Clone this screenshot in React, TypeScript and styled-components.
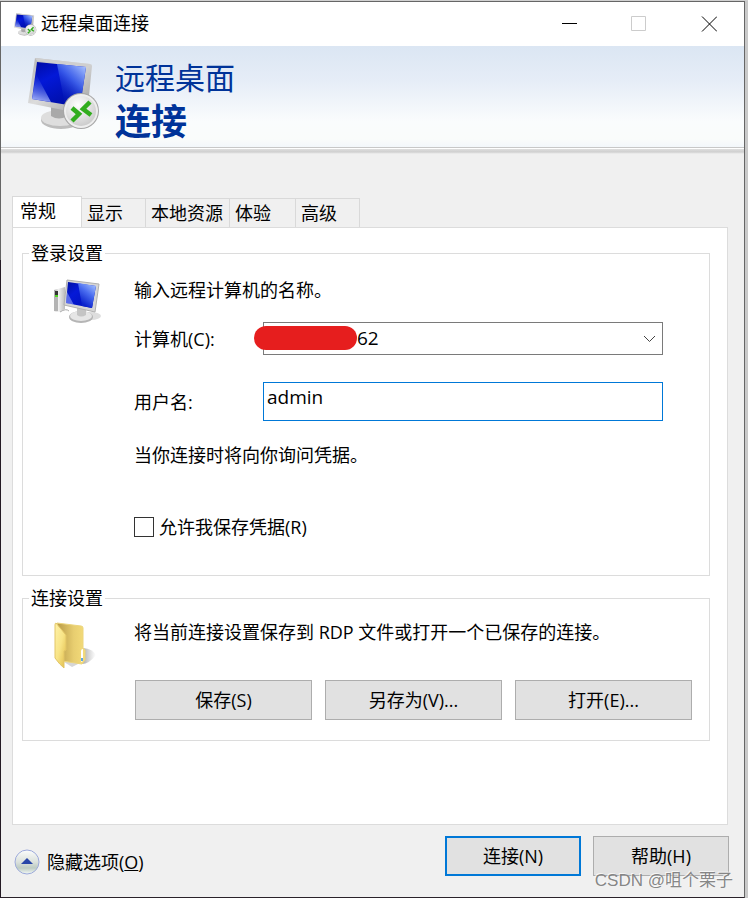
import React from 'react';
import styled, { createGlobalStyle } from 'styled-components';

const GlobalStyle = createGlobalStyle`
  * { box-sizing: border-box; }
  body {
    margin: 0;
    color: #000;
    font-family: "Open Sans", "Noto Sans CJK SC", sans-serif;
    font-size: 18px;
    line-height: 24px;
  }
  button, input, select { font: inherit; color: inherit; }
  svg { display: block; flex: none; }
`;

const Desktop = styled.div`
  display: flex;
  min-height: 100vh;
  padding: 1px 3px 0 1px;
  background: linear-gradient(#d0d0d0, #d0d0d0) 0 0 / 100% 1px no-repeat,
    linear-gradient(#c9c9c9, #c9c9c9) 100% 0 / 3px 100% no-repeat,
    linear-gradient(#666 260px, #241a24 260px);
`;

const Dialog = styled.div`
  position: relative;
  flex: 1;
  display: flex;
  flex-direction: column;
  background: #f0f0f0;
  border: solid #666;
  border-width: 1px 1px 1px 0;
  border-bottom-color: #2a222a;
`;

const TitleBar = styled.header`
  display: flex;
  align-items: center;
  height: 44px;
  padding-left: 12px;
  background: #fff;
`;

const Title = styled.span`
  flex: 1;
  padding: 0 0 2px 4px;
`;

const CaptionButton = styled.button`
  display: flex;
  align-items: center;
  justify-content: center;
  width: 70px;
  height: 44px;
  padding: 0;
  border: 0;
  background: transparent;
`;

const Banner = styled.div`
  display: flex;
  height: 101px;
  padding: 8px 0 0 24px;
  background: linear-gradient(#dbe6f3, #e6edf7 35%, #fafcfd 75%, #fafcfb 92%, #f3f7fb);
`;

const BannerText = styled.h1`
  display: flex;
  flex-direction: column;
  margin: 2px 0 0 14px;
  color: #003399;
  font-size: 30px;
  font-weight: 400;
  line-height: 44px;

  strong {
    font-size: 36px;
    font-weight: 700;
  }
`;

const Ridge = styled.div`
  height: 7px;
  border-top: 1px solid #c8c8c8;
  background: linear-gradient(#fff 1px, #dedede 1px, #cfcfcf 4px, #e2e2e2 5px, #f0f0f0);
`;

const Body = styled.main`
  flex: 1;
  display: flex;
  flex-direction: column;
  padding: 42px 16px 0 11px;
`;

const TabList = styled.div`
  display: flex;
  align-items: flex-end;
`;

const Tab = styled.button<{ $width: number; $active?: boolean }>`
  width: ${(p) => p.$width}px;
  height: ${(p) => (p.$active ? 32 : 29)}px;
  margin-bottom: ${(p) => (p.$active ? -1 : 0)}px;
  padding: ${(p) => (p.$active ? '0 0 3px 7px' : '0 0 0 5px')};
  border: solid #d9d9d9;
  border-width: ${(p) => (p.$active ? '1px 1px 0 1px' : '1px 1px 0 0')};
  background: ${(p) => (p.$active ? '#fff' : '#f0f0f0')};
  text-align: left;
  white-space: nowrap;
`;

const Panel = styled.section`
  flex: 1;
  display: flex;
  flex-direction: column;
  gap: 10px;
  padding: 13px 17px 20px 9px;
  border: 1px solid #dcdcdc;
  background: #fff;
`;

const Group = styled.fieldset`
  min-width: 0;
  margin: 0;
  padding: 0;
  border: 1px solid #dcdcdc;

  legend {
    margin-left: 6px;
    padding: 0 2px;
  }
`;

const GroupBody = styled.div<{ $pad: string }>`
  display: grid;
  grid-template-columns: 111px 1fr;
  align-items: start;
  padding: ${(p) => p.$pad};
`;

const IconCell = styled.div`
  padding-left: 30px;
`;

const Stack = styled.div`
  display: flex;
  flex-direction: column;
`;

const Text = styled.p<{ $top?: number }>`
  margin: ${(p) => p.$top ?? 0}px 0 0;
`;

const Field = styled.div<{ $top: number }>`
  display: grid;
  grid-template-columns: 129px 1fr;
  align-items: center;
  margin-top: ${(p) => p.$top}px;
`;

const Combo = styled.div`
  position: relative;
  display: flex;
  align-items: center;
`;

const Select = styled.select`
  flex: 1;
  height: 33px;
  padding: 0 0 2px 93px;
  border: 1px solid #7a7a7a;
  border-radius: 0;
  background: #fff;
  font-size: 19px;
  appearance: none;
`;

const ComboArrow = styled.svg`
  position: absolute;
  right: 7px;
  pointer-events: none;
`;

const Redaction = styled.span`
  position: absolute;
  left: -9px;
  top: 4px;
  width: 103px;
  height: 24px;
  border-radius: 12px;
  background: #e61e1e;
`;

const TextInput = styled.input`
  width: 100%;
  height: 39px;
  padding: 0 3px 9px;
  border: 1px solid #0078d7;
  border-radius: 0;
  outline: 0;
  background: #fff;
  font-size: 19px;
`;

const Check = styled.label`
  display: flex;
  align-items: center;
  gap: 5px;
  margin-top: 48px;

  input {
    appearance: none;
    width: 20px;
    height: 20px;
    margin: 0;
    border: 1px solid #333;
    background: #fff;
  }
  input:checked { background: #333; }
`;

const ButtonRow = styled.div`
  display: flex;
  gap: 13px;
  margin: 36px 0 0 1px;

  button { flex: 1; }
`;

const PushButton = styled.button<{ $primary?: boolean }>`
  min-width: 136px;
  height: 40px;
  padding: 0;
  border: ${(p) => (p.$primary ? '2px solid #0078d7' : '1px solid #adadad')};
  background: #e1e1e1;
`;

const Footer = styled.footer`
  display: flex;
  align-items: flex-start;
  gap: 12px;
  padding: 11px 15px 21px 13px;
`;

const OptionsToggle = styled.button`
  display: flex;
  align-items: center;
  gap: 7px;
  margin: 13px auto 0 0;
  padding: 0;
  border: 0;
  background: transparent;
`;

const Watermark = styled.span`
  position: absolute;
  right: 11px;
  bottom: 4px;
  color: rgba(120, 120, 120, 0.9);
  font-family: "Liberation Sans", "Noto Sans CJK SC", sans-serif;
  font-size: 17px;
  text-shadow: -1px -1px 0 rgba(255, 255, 255, 0.7);
  white-space: nowrap;
  pointer-events: none;
`;

const RemoteIcon = ({ size, id }: { size: number; id: string }) => (
  <svg width={size} height={size} viewBox="0 0 76 76" aria-hidden="true">
    <defs>
      <linearGradient id={`${id}-frame`} x1="0" y1="0" x2="1" y2="1">
        <stop offset="0" stopColor="#b4b4b4" />
        <stop offset=".45" stopColor="#dcdcdc" />
        <stop offset="1" stopColor="#999" />
      </linearGradient>
      <linearGradient id={`${id}-screen`} x1="0" y1="0" x2=".6" y2="1">
        <stop offset="0" stopColor="#000aa0" />
        <stop offset=".4" stopColor="#0318d8" />
        <stop offset="1" stopColor="#000ea4" />
      </linearGradient>
      <linearGradient id={`${id}-shine`} x1=".9" y1="0" x2=".35" y2=".85">
        <stop offset="0" stopColor="#a9c3ff" />
        <stop offset=".5" stopColor="#4468ee" stopOpacity=".85" />
        <stop offset="1" stopColor="#0a20c0" stopOpacity=".3" />
      </linearGradient>
      <linearGradient id={`${id}-glow`} x1="0" y1="1" x2=".2" y2="0">
        <stop offset="0" stopColor="#b9c6ff" />
        <stop offset="1" stopColor="#2742d8" stopOpacity=".1" />
      </linearGradient>
      <radialGradient id={`${id}-badge`} cx=".4" cy=".3" r=".8">
        <stop offset="0" stopColor="#fff" />
        <stop offset="1" stopColor="#c6c6c6" />
      </radialGradient>
    </defs>
    <ellipse cx="36" cy="66" rx="20" ry="9" fill="#bdbdbd" />
    <ellipse cx="35" cy="64" rx="19" ry="8" fill="#dedede" />
    <path d="M26 50h16v12q-8 5-16 0z" fill="#a9a9a9" />
    <path d="M10 4 65 10q2 0 2 2l-4 40-5 8L3 49z" fill={`url(#${id}-frame)`} />
    <path d="M10 4 65 10l-3 3L12 7z" fill="#cfcfcf" />
    <path d="M12 8 61 13 55 53 7 45z" fill={`url(#${id}-screen)`} />
    <path d="M32 10 61 13 55 53 40 51z" fill={`url(#${id}-shine)`} />
    <path d="M11 20 26 48 7 45z" fill={`url(#${id}-glow)`} />
    <circle cx="56" cy="57" r="18" fill="#a6a6a6" />
    <circle cx="56" cy="57" r="17" fill="#eee" />
    <circle cx="56" cy="57" r="15" fill={`url(#${id}-badge)`} />
    <path d="m47 54 7 6-7 7M65 48l-7 7 8 6" fill="none" stroke="#31ad1d" strokeWidth="4.5" />
  </svg>
);

const ComputerIcon = () => (
  <svg width="52" height="48" viewBox="0 0 52 48" aria-hidden="true">
    <defs>
      <linearGradient id="pc-screen" x1="0" y1="0" x2="1" y2="1">
        <stop offset="0" stopColor="#0010a0" />
        <stop offset=".35" stopColor="#0519d8" />
        <stop offset="1" stopColor="#0010b0" />
      </linearGradient>
      <linearGradient id="pc-shine" x1=".9" y1="0" x2=".4" y2=".9">
        <stop offset="0" stopColor="#a9c6ff" />
        <stop offset=".5" stopColor="#4a6df0" />
        <stop offset="1" stopColor="#0a22cc" />
      </linearGradient>
      <linearGradient id="pc-tower">
        <stop offset="0" stopColor="#a2a2a2" />
        <stop offset=".4" stopColor="#f1f1f1" />
        <stop offset="1" stopColor="#bcbcbc" />
      </linearGradient>
    </defs>
    <ellipse cx="38" cy="38" rx="10" ry="4" fill="#dedede" />
    <path d="M1 12 12 9v22l-6 3-5-1z" fill="url(#pc-tower)" />
    <path d="M1 13h4v20H1z" fill="#b4b4b4" />
    <path d="M2 13h3v4H2z" fill="#333" />
    <path d="M2 17h3v2H2z" fill="#4fd622" />
    <path d="M7 34q6-4 9-1" fill="none" stroke="#aaa" />
    <ellipse cx="28" cy="39" rx="12" ry="6" fill="#b5b5b5" />
    <ellipse cx="28" cy="38" rx="11" ry="5" fill="#e6e6e6" />
    <path d="M24 30h9v7q-5 3-9 0z" fill="#c4c4c4" />
    <path d="M14 2 46 6 42 34 11 27z" fill="#d6d6d6" stroke="#b0b0b0" />
    <path d="M15 4 43 8 39 30 13 25z" fill="url(#pc-screen)" />
    <path d="M25 5 43 8 39 30 29 28z" fill="url(#pc-shine)" />
    <path d="M14 14 21 27 13 25z" fill="#aebeff" opacity=".5" />
  </svg>
);

const FolderIcon = () => (
  <svg width="48" height="50" viewBox="0 0 48 50" aria-hidden="true">
    <defs>
      <linearGradient id="folder-front" x1="0" y1="0" x2="1" y2="1">
        <stop offset="0" stopColor="#fff2a9" />
        <stop offset=".5" stopColor="#f8e486" />
        <stop offset="1" stopColor="#dfba48" />
      </linearGradient>
      <linearGradient id="folder-back">
        <stop offset="0" stopColor="#b99b48" />
        <stop offset=".6" stopColor="#e8ce70" />
        <stop offset="1" stopColor="#f4dc7a" />
      </linearGradient>
      <linearGradient id="folder-shade">
        <stop offset="0" stopColor="#777" stopOpacity=".65" />
        <stop offset="1" stopColor="#999" stopOpacity="0" />
      </linearGradient>
    </defs>
    <path d="M30 28q10 1 13 7-7 9-14 9z" fill="url(#folder-shade)" />
    <path d="M11 42h18l-10 5z" fill="#bbb" opacity=".6" />
    <path d="M4 3 28 6q2 0 2 2v20l2 2v10l-3 4-20-3z" fill="url(#folder-back)" stroke="#ecd57c" />
    <path d="M3 3Q2 3 2 5v33q5 7 9 10V31l2-1V15z" fill="url(#folder-front)" stroke="#e2c566" />
    <path d="M28 31q0-2 2-2v12l-2 1z" fill="#fff" />
    <path d="M28 38h2v3h-2z" fill="#5ba7e8" />
  </svg>
);

const CollapseIcon = () => (
  <svg width="26" height="26" viewBox="0 0 26 26" aria-hidden="true">
    <defs>
      <linearGradient id="collapse" x1="0" y1="0" x2="0" y2="1">
        <stop offset="0" stopColor="#fcfdfc" />
        <stop offset=".5" stopColor="#dbe1dc" />
        <stop offset=".75" stopColor="#bdcbc3" />
        <stop offset="1" stopColor="#f4faf6" />
      </linearGradient>
    </defs>
    <circle cx="13" cy="13" r="12" fill="url(#collapse)" stroke="#9daadb" />
    <path d="m13 9 6 6H7z" fill="#2745a8" />
  </svg>
);

const tabs = [
  { label: '常规', width: 70 },
  { label: '显示', width: 64 },
  { label: '本地资源', width: 84 },
  { label: '体验', width: 66 },
  { label: '高级', width: 64 },
];

export default function App() {
  return (
    <>
      <GlobalStyle />
      <Desktop>
        <Dialog role="dialog" aria-label="远程桌面连接">
          <TitleBar>
            <RemoteIcon size={24} id="small" />
            <Title>远程桌面连接</Title>
            <CaptionButton aria-label="最小化">
              <svg width="16" height="16"><path d="M1 7.5h15" stroke="#000" /></svg>
            </CaptionButton>
            <CaptionButton aria-label="最大化" disabled>
              <svg width="16" height="16"><path d="M.5.5h14v14H.5z" fill="none" stroke="#ccc" /></svg>
            </CaptionButton>
            <CaptionButton aria-label="关闭">
              <svg width="16" height="16"><path d="m1 .5 15 15m0-15-15 15" stroke="#000" /></svg>
            </CaptionButton>
          </TitleBar>
          <Banner>
            <RemoteIcon size={76} id="large" />
            <BannerText>
              远程桌面
              <strong>连接</strong>
            </BannerText>
          </Banner>
          <Ridge />
          <Body>
            <TabList role="tablist">
              {tabs.map((tab, i) => (
                <Tab key={tab.label} role="tab" aria-selected={i === 0} $active={i === 0} $width={tab.width}>
                  {tab.label}
                </Tab>
              ))}
            </TabList>
            <Panel role="tabpanel">
              <Group>
                <legend>登录设置</legend>
                <GroupBody $pad="13px 46px 36px 0">
                  <IconCell><ComputerIcon /></IconCell>
                  <Stack>
                    <Text>输入远程计算机的名称。</Text>
                    <Field $top={20}>
                      <label htmlFor="computer">计算机(C):</label>
                      <Combo>
                        <Select id="computer" defaultValue="62"><option>62</option></Select>
                        <Redaction />
                        <ComboArrow width="13" height="8"><path d="m1 1 5.5 5.5L12 1" fill="none" stroke="#444" /></ComboArrow>
                      </Combo>
                    </Field>
                    <Field $top={27}>
                      <label htmlFor="user">用户名:</label>
                      <TextInput id="user" defaultValue="admin" />
                    </Field>
                    <Text $top={22}>当你连接时将向你询问凭据。</Text>
                    <Check>
                      <input type="checkbox" />
                      允许我保存凭据(R)
                    </Check>
                  </Stack>
                </GroupBody>
              </Group>
              <Group>
                <legend>连接设置</legend>
                <GroupBody $pad="10px 17px 20px 0">
                  <IconCell><FolderIcon /></IconCell>
                  <Stack>
                    <Text>将当前连接设置保存到 RDP 文件或打开一个已保存的连接。</Text>
                    <ButtonRow>
                      <PushButton>保存(S)</PushButton>
                      <PushButton>另存为(V)...</PushButton>
                      <PushButton>打开(E)...</PushButton>
                    </ButtonRow>
                  </Stack>
                </GroupBody>
              </Group>
            </Panel>
          </Body>
          <Footer>
            <OptionsToggle>
              <CollapseIcon />
              <span>隐藏选项(<u>O</u>)</span>
            </OptionsToggle>
            <PushButton $primary>连接(N)</PushButton>
            <PushButton>帮助(H)</PushButton>
          </Footer>
          <Watermark>CSDN @咀个栗子</Watermark>
        </Dialog>
      </Desktop>
    </>
  );
}
